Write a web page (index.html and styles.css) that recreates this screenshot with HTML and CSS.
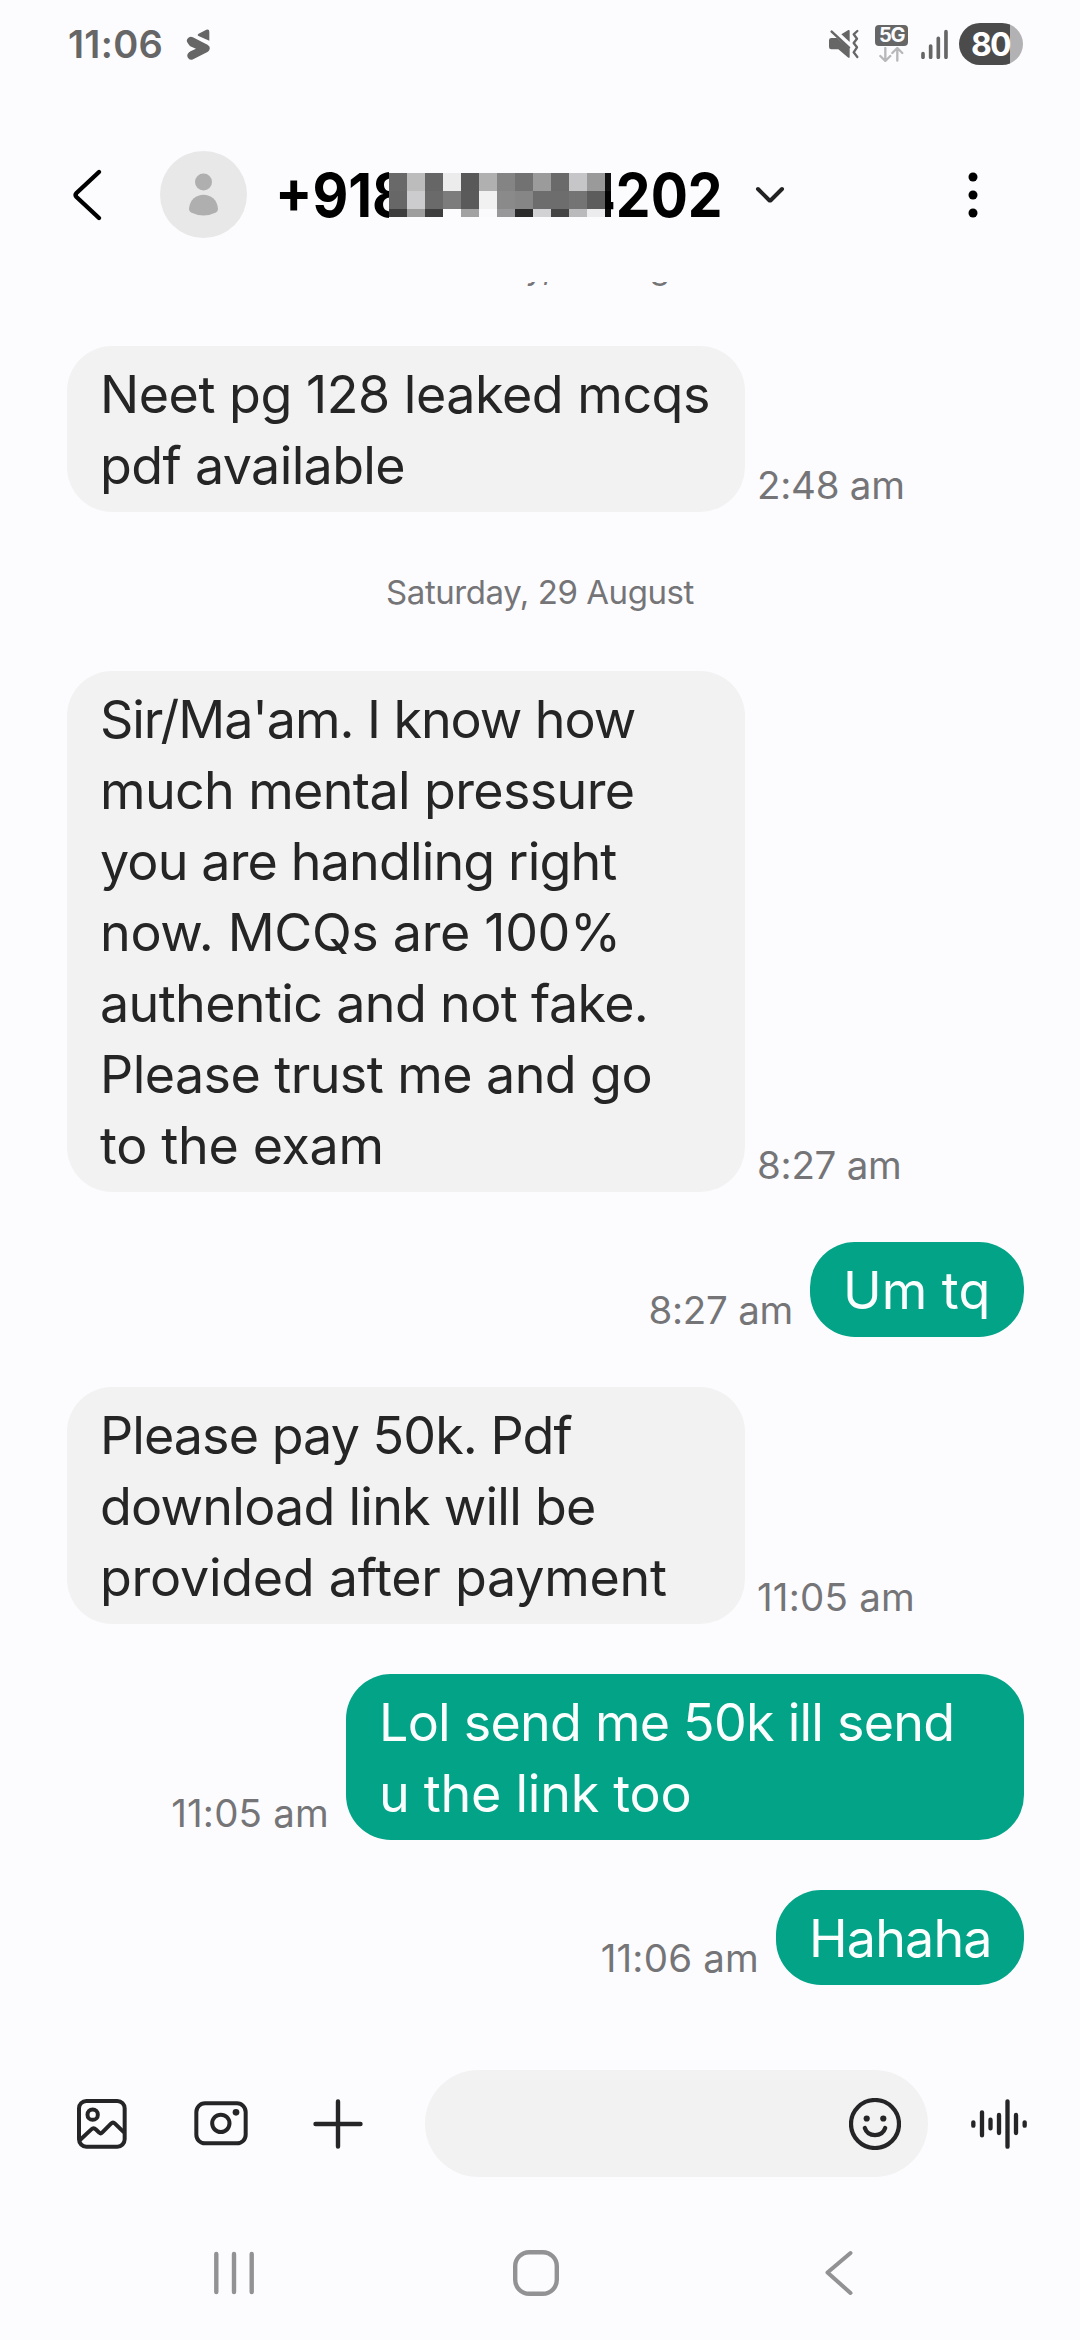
FILE: index.html
```
<!DOCTYPE html>
<html lang="en">
<head>
<meta charset="utf-8">
<title>Messages</title>
<link rel="stylesheet" href="styles.css">
</head>
<body>
<div class="phone">
  <div class="status">
    <span class="clock">11:06</span>
    <svg class="app-icon" viewBox="438 84 76 98"><path d="M476 101 499 89Q508 86 508 95V122L474 107Q471 104 476 101Z" fill="#666"/><path d="M453 122 497 145 454 167 471 148Z" fill="#666" stroke="#666" stroke-width="24" stroke-linejoin="round"/><path d="M442 135 468 146 442 158Z" fill="#fcfcff"/></svg>
    <div class="status-right">
      <svg class="mute" viewBox="84 84 96 96"><path d="M124 103 145 90Q149 89 149 93V126ZM94 114H111L149 147V170Q149 175 145 173L115 148H94Q87 148 87 141V121Q87 114 94 114Z" fill="#666"/><path d="M98 92 153 142" stroke="#fcfcff" stroke-width="9"/><path d="M95 95 147 143" stroke="#666" stroke-width="7.500" stroke-linecap="round"/><path d="M172 93 161 103 171 116 161 129 171 142 161 157 172 171" fill="none" stroke="#666" stroke-width="7" stroke-linecap="round" stroke-linejoin="round"/></svg>
      <div class="network"><span class="badge">5G</span><svg class="arrows" viewBox="236 137 76 45"><path d="M255 140V178M240 164 255 179 270 164M291 178V140M276 155 291 140 306 155" fill="none" stroke="#b8b8ba" stroke-width="7" stroke-linecap="round" stroke-linejoin="round"/></svg></div>
      <svg class="signal" viewBox="362 84 82 92"><path d="M368 158V169M391 135V169M414 112V169M437 92V169" stroke="#666" stroke-width="11" stroke-linecap="round"/></svg>
      <span class="battery">80</span>
    </div>
  </div>

  <header class="header">
    <svg class="back" viewBox="0 0 32 56"><path d="M28 5 5.500 26Q3.500 28 5.500 30L28 51" fill="none" stroke="#000" stroke-width="4.400" stroke-linecap="round" stroke-linejoin="round"/></svg>
    <svg class="avatar" viewBox="0 0 87 87"><circle cx="43.500" cy="43.500" r="43.500" fill="#e8e8e8"/><circle cx="43.500" cy="31" r="8.500" fill="#afafaf"/><path d="M29 58C30 39 57 39 58 58Q58 60.500 56 61.500Q43.500 67.500 31 61.500Q29 60.500 29 58Z" fill="#afafaf"/></svg>
    <div class="title">
      <span class="num num-head"><span>+918</span></span>
      <svg class="mosaic" viewBox="0 0 222 44" shape-rendering="crispEdges">
        <g><rect width="18" height="18" fill="#696969"/><rect x="18" width="18" height="18" fill="#bcbcbd"/><rect x="36" width="18" height="18" fill="#666"/><rect x="54" width="18" height="18" fill="#ececed"/><rect x="72" width="18" height="18" fill="#595959"/><rect x="90" width="18" height="18" fill="#b0b0b1"/><rect x="108" width="18" height="18" fill="#848485"/><rect x="126" width="18" height="18" fill="#727273"/><rect x="144" width="18" height="18" fill="#9b9b9c"/><rect x="162" width="18" height="18" fill="#6a6a6a"/><rect x="180" width="18" height="18" fill="#c6c6c8"/><rect x="198" width="18" height="18" fill="#9a9a9b"/><rect x="216" width="6" height="18" fill="#121212"/></g>
        <g transform="translate(0 18)"><rect width="18" height="18" fill="#676768"/><rect x="18" width="18" height="18" fill="#ccccce"/><rect x="36" width="18" height="18" fill="#6a6a6a"/><rect x="54" width="18" height="18" fill="#7c7c7d"/><rect x="72" width="18" height="18" fill="#5a5a5a"/><rect x="90" width="18" height="18" fill="#f1f1f2"/><rect x="108" width="18" height="18" fill="#8a8a8b"/><rect x="126" width="18" height="18" fill="#868687"/><rect x="144" width="18" height="18" fill="#6d6d6e"/><rect x="162" width="18" height="18" fill="#6d6d6e"/><rect x="180" width="18" height="18" fill="#747475"/><rect x="198" width="18" height="18" fill="#5c5c5d"/><rect x="216" width="6" height="18" fill="#020202"/></g>
        <g transform="translate(0 36)"><rect width="18" height="8" fill="#3d3d3e"/><rect x="18" width="18" height="8" fill="#9d9d9e"/><rect x="36" width="18" height="8" fill="#3e3e3f"/><rect x="54" width="18" height="8" fill="#fcfcfe"/><rect x="72" width="18" height="8" fill="#a2a2a3"/><rect x="90" width="18" height="8" fill="#fafafc"/><rect x="108" width="18" height="8" fill="#98989a"/><rect x="126" width="18" height="8" fill="#2b2b2c"/><rect x="144" width="18" height="8" fill="#d2d2d4"/><rect x="162" width="18" height="8" fill="#444"/><rect x="180" width="18" height="8" fill="#bababc"/><rect x="198" width="18" height="8" fill="#ececee"/><rect x="216" width="6" height="8" fill="#0c0c0c"/></g>
      </svg>
      <span class="num num-tail"><span>4202</span></span>
    </div>
    <svg class="expand" viewBox="0 0 30 18"><path d="M3 3 14 14Q15 15 16 14L27 3" fill="none" stroke="#222" stroke-width="4" stroke-linecap="round" stroke-linejoin="round"/></svg>
    <svg class="more" viewBox="0 0 10 46"><circle cx="5" cy="5" r="4.500"/><circle cx="5" cy="23" r="4.500"/><circle cx="5" cy="41" r="4.500"/></svg>
  </header>

  <main class="chat">
    <div class="date">Wednesday, 26 August</div>
    <div class="row">
      <p class="bubble in"><span class="t-45">Neet pg 128 leaked mcqs</span><span class="t-65">pdf available</span></p>
      <time class="t-25">2:48 am</time>
    </div>
    <div class="date">Saturday, 29 August</div>
    <div class="row">
      <p class="bubble in"><span class="t-105">Sir/Ma'am. I know how</span><span class="t-65">much mental pressure</span><span class="t-85">you are handling right</span><span class="t-35">now. MCQs are 100%</span><span class="t-65">authentic and not fake.</span><span class="t-55">Please trust me and go</span><span class="t-35">to the exam</span></p>
      <time class="t-25">8:27 am</time>
    </div>
    <div class="row sent">
      <time class="t-25">8:27 am</time>
      <p class="bubble out w-short"><span>Um tq</span></p>
    </div>
    <div class="row">
      <p class="bubble in"><span class="t-95">Please pay 50k. Pdf</span><span class="t-75">download link will be</span><span class="t-25">provided after payment</span></p>
      <time>11:05 am</time>
    </div>
    <div class="row sent">
      <time>11:05 am</time>
      <p class="bubble out w-full"><span class="t-75">Lol send me 50k ill send</span><span class="t-25">u the link too</span></p>
    </div>
    <div class="row sent">
      <time>11:06 am</time>
      <p class="bubble out w-mid"><span class="t-85">Hahaha</span></p>
    </div>
  </main>

  <footer class="composer">
    <svg class="gallery" viewBox="82 148 150 150"><g fill="none" stroke="#252528" stroke-width="12" stroke-linejoin="round"><rect x="88" y="154" width="137" height="137" rx="22"/><circle cx="129" cy="195" r="15.500"/><path d="M91 271 125 239Q132 232 138 239L149 249Q153 253 158 248L184 222Q190 216 196 222L223 248"/></g></svg>
    <svg class="camera" viewBox="432 157 162 135"><rect x="439" y="164" width="148" height="120" rx="26" fill="none" stroke="#252528" stroke-width="12"/><circle cx="512.500" cy="224" r="26" fill="none" stroke="#252528" stroke-width="12"/><circle cx="558" cy="191" r="10" fill="#252528"/></svg>
    <svg class="plus" viewBox="0 0 50 50"><path d="M25 2.500V47.500M2.500 25H47.500" stroke="#252528" stroke-width="4.400" stroke-linecap="round"/></svg>
    <div class="field"><svg class="smile" viewBox="0 0 52 52"><circle cx="26" cy="26" r="24" fill="none" stroke="#252528" stroke-width="4.200"/><circle cx="17.700" cy="20.500" r="3.100" fill="#252528"/><circle cx="34.300" cy="20.500" r="3.100" fill="#252528"/><path d="M15.800 30C19 39.500 33 39.500 36.200 30" fill="none" stroke="#252528" stroke-width="4.200" stroke-linecap="round"/></svg></div>
    <svg class="wave" viewBox="453 147 168 150"><path d="M460 217V227M486 187V256M511.500 209V235M537 195V249M562.500 154V290M588 195V249M614 217V227" stroke="#252528" stroke-width="13" stroke-linecap="round"/></svg>
  </footer>

  <nav class="navbar">
    <svg class="recents" viewBox="0 0 42 60"><path d="M3.300 11V49M21 11V49M38.700 11V49" stroke="#929295" stroke-width="4.400" stroke-linecap="round"/></svg>
    <svg class="home" viewBox="0 0 46 46"><rect x="2.200" y="2.200" width="41.600" height="41.600" rx="14" fill="none" stroke="#929295" stroke-width="4.400"/></svg>
    <svg class="nav-back" viewBox="0 0 30 46"><path d="M26.500 3 3.500 22.500 26.500 43" fill="none" stroke="#929295" stroke-width="4" stroke-linecap="round" stroke-linejoin="round"/></svg>
  </nav>
</div>
</body>
</html>
```
FILE: styles.css
```
* { box-sizing: border-box; }
body { margin: 0; background: #fcfcff; font-family: Inter, "Liberation Sans", sans-serif; }
svg { display: block; flex: none; }
.phone { width: 1080px; height: 2340px; display: flex; flex-direction: column; overflow: hidden; }

.status { height: 88px; flex: none; display: flex; align-items: center; padding: 0 57px 0 68px; color: #666; }
.clock { width: 118px; font-size: 38px; font-weight: 600; line-height: 46px; letter-spacing: 0.3px; }
.app-icon { width: 25.300px; height: 32.700px; }
.status-right { margin-left: auto; display: flex; align-items: center; }
.mute { width: 32px; height: 32px; margin-right: 15px; }
.network { width: 33px; height: 38px; display: flex; flex-direction: column; align-items: center; margin: 0 12.500px 0 0; }
.badge { width: 33px; height: 21px; flex: none; border-radius: 4px; background: #666; color: #fcfcff; font-size: 20px; font-weight: 700; line-height: 21px; letter-spacing: -1.200px; text-align: center; }
.arrows { width: 25.300px; height: 15px; margin-top: 1px; }
.signal { width: 27.300px; height: 30.700px; margin-right: 11px; }
.battery { width: 64px; height: 42px; border-radius: 21px; background: linear-gradient(90deg, #4b4b4b 51px, #b2b2b4 51px); color: #fff; font-size: 32px; font-weight: 700; line-height: 43px; letter-spacing: -1.800px; padding-left: 12px; }

.header { height: 194px; flex: none; display: flex; align-items: flex-start; padding-left: 71px; }
.back { width: 32px; height: 56px; margin-top: 79px; }
.avatar { width: 87px; height: 87px; margin: 63px 0 0 57px; }
.title { display: flex; width: 448px; height: 72px; margin: 71px 0 0 28px; align-items: center; }
.num { height: 72px; display: flex; overflow: hidden; color: #000; font-size: 60px; font-weight: 700; line-height: 72px; }
.num span { flex: none; transform: scaleX(0.92); }
.num-head { width: 115px; }
.num-head span { transform-origin: left; }
.num-tail { width: 113px; justify-content: flex-end; }
.num-tail span { transform-origin: right; }
.mosaic { width: 222px; height: 44px; }
.expand { width: 30px; height: 18px; margin: 98px 0 0 32px; }
.more { width: 10px; height: 46px; margin: 84px 0 0 183px; }

.chat { height: 1753px; flex: none; overflow: hidden; padding: 0 56px 0 67px; }
.date { margin-top: 60px; height: 40px; text-align: center; padding-right: 11px; font-size: 33px; line-height: 40px; letter-spacing: -0.440px; color: #757578; }
.date:first-child { margin-top: -35px; }
.date + .row { margin-top: 59px; }
.row { display: flex; align-items: flex-end; margin-top: 50px; }
.sent { justify-content: flex-end; }
.bubble { margin: 0; padding: 13px 0 11px 33px; border-radius: 45px; font-size: 52px; line-height: 71px; white-space: nowrap; }
.bubble span { display: block; }
.in { width: 678px; background: #f2f2f2; color: #252525; }
.out { background: #02a387; color: #fafffe; }
.w-short { width: 214px; }
.w-mid { width: 248px; }
.w-full { width: 678px; }
time { margin: 0 0 4px 12px; font-size: 38.500px; line-height: 46px; color: #757578; letter-spacing: 0.200px; white-space: nowrap; }
.sent time { margin: 0 17px 4px 0; }

/* Tracking steps, in hundredths of a pixel */
.t-25 { letter-spacing: -0.260px; }
.t-35 { letter-spacing: -0.330px; }
.t-45 { letter-spacing: -0.470px; }
.t-55 { letter-spacing: -0.570px; }
.t-65 { letter-spacing: -0.640px; }
.t-75 { letter-spacing: -0.760px; }
.t-85 { letter-spacing: -0.850px; }
.t-95 { letter-spacing: -0.930px; }
.t-105 { letter-spacing: -1.060px; }

.composer { height: 177px; flex: none; display: flex; align-items: center; padding-left: 77px; }
.gallery { width: 50px; height: 50px; }
.camera { width: 54px; height: 45px; margin-left: 67px; }
.plus { width: 50px; height: 50px; margin-left: 65px; }
.field { width: 503px; height: 107px; margin-left: 62px; border-radius: 54px; background: #f2f2f2; display: flex; align-items: center; justify-content: flex-end; padding-right: 27.500px; }
.smile { width: 52px; height: 52px; }
.wave { width: 56px; height: 50px; margin-left: 43px; }

.navbar { flex: 1; display: flex; align-items: center; padding: 0 0 7px 213px; }
.recents { width: 42px; height: 60px; }
.home { width: 46px; height: 46px; margin-left: 258px; }
.nav-back { width: 30px; height: 46px; margin-left: 265px; }
```
